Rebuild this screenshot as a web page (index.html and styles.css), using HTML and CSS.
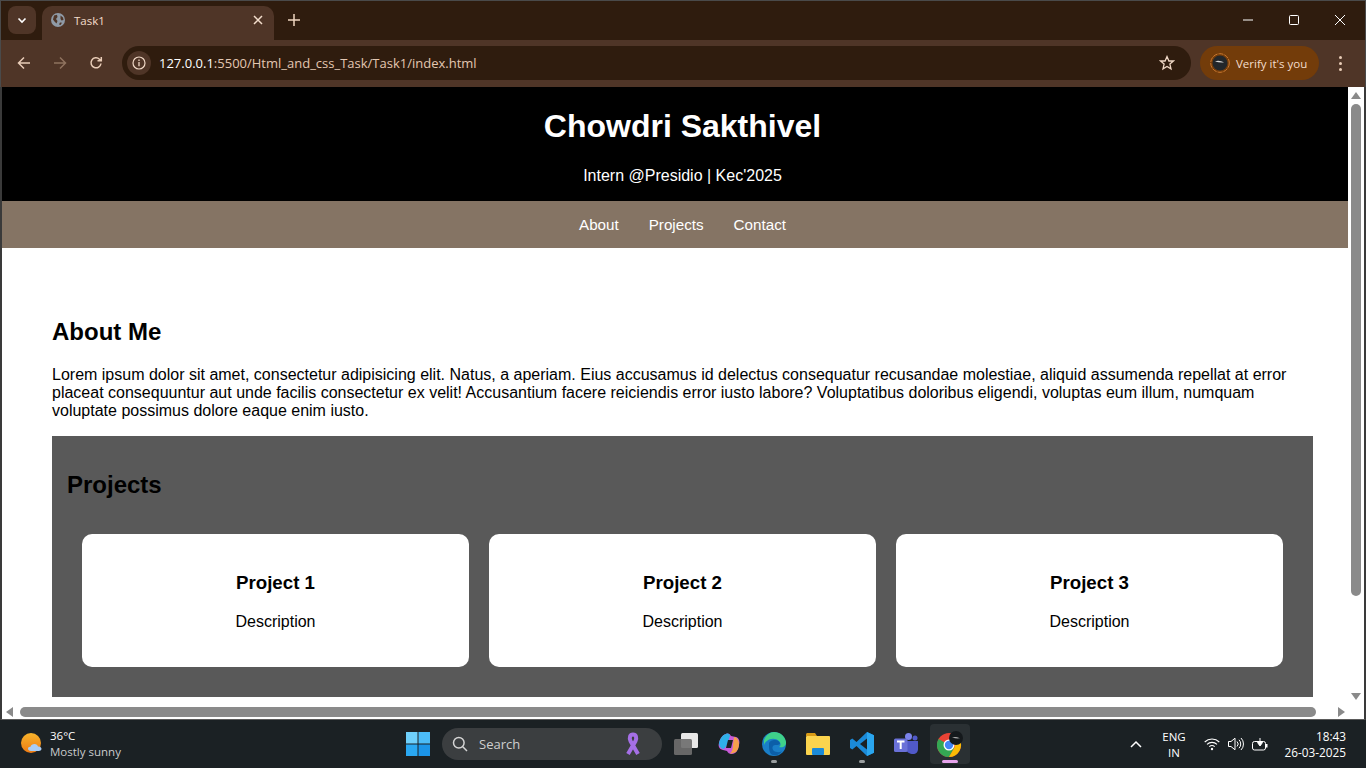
FILE: index.html
```html
<!DOCTYPE html>
<html lang="en">

<head>
  <meta charset="UTF-8">
  <meta name="viewport" content="width=device-width, initial-scale=1.0">
  <title>Task1</title>
  <link rel="stylesheet" href="styles.css">
</head>

<body>
  <div class="window">
    <div class="tabstrip">
      <div class="tabsearch">
        <svg width="12" height="12" viewBox="0 0 12 12"><path d="M2.5 4.5 6 8l3.5-3.5" fill="none" stroke="#fff" stroke-width="1.6"/></svg>
      </div>
      <div class="tab">
        <svg class="globe" width="14" height="14" viewBox="0 0 14 14"><circle cx="7" cy="7" r="7" fill="#8f9aa6"/><path d="M3 2.500 6 1.800 6.500 4 5 6 6.500 8 5.500 10.500 3.500 8.500 2 6.500zM9.500 2.500l2.500 2 .5 2.500-2 .5L9.500 6zM9 9.500l2 .2L9.500 12 8 11.500z" fill="#4f3527"/></svg>
        <span class="tab-title">Task1</span>
        <svg class="tab-close" width="10" height="10" viewBox="0 0 10 10"><path d="M1 1l8 8M9 1l-8 8" stroke="#f3ddcc" stroke-width="1.5"/></svg>
      </div>
      <svg class="newtab" width="12" height="12" viewBox="0 0 12 12"><path d="M6 0v12M0 6h12" stroke="#f0d5c0" stroke-width="1.5"/></svg>
      <div class="winctrls">
        <svg width="12" height="12" viewBox="0 0 12 12"><path d="M1 6h10" stroke="#fff"/></svg>
        <svg width="12" height="12" viewBox="0 0 12 12"><rect x="1.5" y="1.5" width="9" height="9" rx="1" fill="none" stroke="#fff"/></svg>
        <svg width="12" height="12" viewBox="0 0 12 12"><path d="M1 1l10 10M11 1 1 11" stroke="#fff"/></svg>
      </div>
    </div>
    <div class="toolbar">
      <svg class="navbtn" width="14" height="14" viewBox="0 0 14 14"><path d="M13 7H2M7 1.5 1.5 7 7 12.5" fill="none" stroke="#e9cdb8" stroke-width="1.5"/></svg>
      <svg class="navbtn" width="14" height="14" viewBox="0 0 14 14"><path d="M1 7h11M7 1.5 12.5 7 7 12.5" fill="none" stroke="#8f735f" stroke-width="1.5"/></svg>
      <svg class="navbtn" width="14" height="14" viewBox="0 0 14 14"><path d="M12 7.5A5 5 0 1 1 10.5 3.2L12 4.6M12.3 1v3.8H8.500" fill="none" stroke="#e9cdb8" stroke-width="1.5"/></svg>
      <div class="omnibox">
        <div class="siteinfo">
          <svg width="14" height="14" viewBox="0 0 14 14"><circle cx="7" cy="7" r="6" fill="none" stroke="#f0d8c6" stroke-width="1.2"/><path d="M7 6v4.200M7 3.600v1.300" stroke="#f0d8c6" stroke-width="1.3"/></svg>
        </div>
        <span class="url"><b>127.0.0.1</b>:5500/Html_and_css_Task/Task1/index.html</span>
        <svg class="star" width="16" height="16" viewBox="0 0 16 16"><path d="M8 1.600 9.900 6h4.600l-3.600 3.100 1.100 4.800L8 11.400l-4 2.500 1.100-4.800L1.500 6h4.600z" fill="none" stroke="#f0d8c6" stroke-width="1.3"/></svg>
      </div>
      <div class="verify">
        <svg width="20" height="20" viewBox="0 0 20 20"><circle cx="10" cy="10" r="9.300" fill="none" stroke="#c9772f" stroke-dasharray="5 1"/><circle cx="10" cy="10" r="7.500" fill="#23272b"/><path d="M5 8.500c3-1.500 6-.5 9 1-3 .2-6 0-9-1z" fill="#d8d8d8"/></svg>
        <span>Verify it's you</span>
      </div>
      <div class="kebab"><i></i><i></i><i></i></div>
    </div>
    <div class="viewport">
      <div class="page">
        <div class="page-body">
          <header class="hero">
            <h1>Chowdri Sakthivel</h1>
            <p>Intern @Presidio | Kec'2025</p>
          </header>
          <nav class="nav">
            <a>About</a>
            <a>Projects</a>
            <a>Contact</a>
          </nav>
          <main class="content">
            <section class="about">
              <h2>About Me</h2>
              <p>Lorem ipsum dolor sit amet, consectetur adipisicing elit. Natus, a aperiam. Eius accusamus id delectus consequatur recusandae molestiae, aliquid assumenda repellat at error placeat consequuntur aut unde facilis consectetur ex velit! Accusantium facere reiciendis error iusto labore? Voluptatibus doloribus eligendi, voluptas eum illum, numquam voluptate possimus dolore eaque enim iusto.</p>
            </section>
            <section class="projects">
              <h2>Projects</h2>
              <div class="cards">
                <div class="card"><h3>Project 1</h3><p>Description</p></div>
                <div class="card"><h3>Project 2</h3><p>Description</p></div>
                <div class="card"><h3>Project 3</h3><p>Description</p></div>
              </div>
            </section>
          </main>
        </div>
      </div>
      <div class="vscroll">
        <svg width="10" height="7" viewBox="0 0 10 7"><path d="M5 0l5 7H0z" fill="#8a8a8a"/></svg>
        <div class="vthumb"></div>
        <svg width="10" height="7" viewBox="0 0 10 7"><path d="M5 7 0 0h10z" fill="#8a8a8a"/></svg>
      </div>
      <div class="hscroll">
        <svg width="7" height="10" viewBox="0 0 7 10"><path d="M0 5l7-5v10z" fill="#8a8a8a"/></svg>
        <div class="hthumb"></div>
        <svg width="7" height="10" viewBox="0 0 7 10"><path d="M7 5 0 0v10z" fill="#8a8a8a"/></svg>
      </div>
    </div>
    <div class="taskbar">
      <div class="weather">
        <svg width="24" height="24" viewBox="0 0 24 24"><defs><linearGradient id="sun" x1="0" y1="0" x2="0" y2="1"><stop offset="0" stop-color="#f7b42c"/><stop offset="1" stop-color="#ee7a12"/></linearGradient></defs><circle cx="11" cy="11" r="10" fill="url(#sun)"/><path d="M11 19c-2 0-3-1-3-2.200s1-2.200 2.500-2c.5-1.800 2-2.800 4-2.800s3 1 3.500 2.500c2-.3 3.500.8 3.500 2.300S20 19 19 19z" fill="#a9cdf5"/></svg>
        <div class="weather-text">
          <span class="temp">36°C</span>
          <span class="cond">Mostly sunny</span>
        </div>
      </div>
      <div class="taskcenter">
        <svg class="win" width="24" height="24" viewBox="0 0 24 24"><rect width="11.500" height="11.500" fill="#6fd0fb"/><rect x="12.500" width="11.500" height="11.500" fill="#4cbcf8"/><rect y="12.500" width="11.500" height="11.500" fill="#2aa8f2"/><rect x="12.500" y="12.500" width="11.500" height="11.500" fill="#1b94e8"/></svg>
        <div class="search">
          <svg width="16" height="16" viewBox="0 0 16 16"><circle cx="6.800" cy="6.800" r="5.300" fill="none" stroke="#d5d5d5" stroke-width="1.500"/><path d="M10.800 10.800 15 15" stroke="#d5d5d5" stroke-width="1.500"/></svg>
          <span>Search</span>
          <svg class="ribbon" width="18" height="24" viewBox="0 0 18 24"><path d="M4 22 11.500 9C13 5.500 12 2.500 9 2.500S5 5.500 6.500 9L14 22" fill="none" stroke="#a56fe6" stroke-width="4"/></svg>
        </div>
        <div class="appicons">
          <div class="app">
            <svg width="24" height="24" viewBox="0 0 24 24"><rect x="7" y="1" width="17" height="15" rx="1.500" fill="#e8e8e8"/><rect x="0" y="7" width="18" height="16" rx="1.500" fill="#6e6e6e" fill-opacity=".92"/></svg>
          </div>
          <div class="app">
            <svg width="24" height="24" viewBox="0 0 24 24"><path d="M8 2c2-1 4 0 5 2l5 1c3 1 4 4 3 8-1 5-3 9-7 9-3 0-4-1-5-3l-4-1C1 17 0 14 1 11 2 7 4 3 8 2z" fill="#c85ad8"/><path d="M8 2c2-1 4 0 4 2l-3 9-3 4c-3 0-5-3-5-6C2 7 4 3 8 2z" fill="#2fb0e8"/><path d="M16 5c3 0 5 3 5 7 0 3-1 6-3 8l-6 2c2-3 3-5 3-9z" fill="#f5a04c"/><path d="M10 8h5l-2 8H8z" fill="#1b2124"/></svg>
          </div>
          <div class="app dot">
            <svg width="26" height="26" viewBox="0 0 26 26"><circle cx="13" cy="13" r="12" fill="#1a7fc8"/><path d="M3 9c2-5 6-8 10-8 6 0 11 4 12 10 .5 4-3 6-7 5 2-1 2-4 0-6-3-3-9-3-12 0-1.500 1-2.500 2-3 4z" fill="#3fd18a"/><path d="M8 13c0-3 3-4 6-4 3 0 5 2 5 4-1 1-4 1-5 1-2 0-4 3-1 6 2 1 5 2 8 0-2 3-5 5-9 4-4-1-4-7-4-11z" fill="#0c5fa8"/></svg>
          </div>
          <div class="app">
            <svg width="24" height="22" viewBox="0 0 24 22"><path d="M0 1.500C0 .7.700 0 1.500 0H9l2 3H0z" fill="#d99b16"/><rect y="3" width="24" height="19" rx="1" fill="#fbd44e"/><rect x="6" y="15" width="12" height="7" rx="1" fill="#1b8ad8"/></svg>
          </div>
          <div class="app dot">
            <svg width="24" height="24" viewBox="0 0 24 24"><path d="M17 0l7 3.200v17.600L17 24 6.500 14 2.300 17.500 0 16V8l2.300-1.500L6.500 10z" fill="#1b8ad8"/><path d="M17 6.500 10 12l7 5.500z" fill="#1b2124"/><path d="M17 0l7 3.200v17.600L17 24z" fill="#2aa6ef"/></svg>
          </div>
          <div class="app">
            <svg width="24" height="24" viewBox="0 0 24 24"><circle cx="14.500" cy="4.500" r="3.500" fill="#7b83eb"/><circle cx="21" cy="6" r="2.500" fill="#5059c9"/><path d="M12 9h12v8c0 3-2 5-5 5s-7-2-7-5z" fill="#5059c9"/><rect x="0" y="6.500" width="13.500" height="13.500" rx="1.500" fill="#6a71d8"/><path d="M3 9.500h7.500M6.700 9.500V17" stroke="#fff" stroke-width="2"/></svg>
          </div>
          <div class="app active">
            <svg width="26" height="26" viewBox="0 0 26 26"><circle cx="12" cy="14" r="12" fill="#ea4335"/><path d="M12 14 1.600 8A12 12 0 0 0 12 26l5.200-9z" fill="#34a853"/><path d="M22.400 8A12 12 0 0 1 12 26l5.200-9a6 6 0 0 0 0-6z" fill="#fbbc05"/><circle cx="12" cy="14" r="5.500" fill="#fff"/><circle cx="12" cy="14" r="4.200" fill="#4285f4"/><circle cx="19" cy="7" r="7" fill="#15191c"/><path d="M15 6.500c2.500-1 5-.5 8 .8-2.500.3-5 .1-8-.8z" fill="#a8a8a8"/></svg>
          </div>
        </div>
      </div>
      <div class="tray">
        <svg class="chev" width="12" height="8" viewBox="0 0 12 8"><path d="M1 7l5-5 5 5" fill="none" stroke="#fff" stroke-width="1.500"/></svg>
        <div class="lang"><span>ENG</span><span>IN</span></div>
        <div class="trayicons">
          <svg width="16" height="14" viewBox="0 0 16 14"><path d="M.7 5a10.500 10.500 0 0 1 14.600 0M3 7.400a7.200 7.200 0 0 1 10 0M5.300 9.700a4 4 0 0 1 5.400 0" fill="none" stroke="#fff" stroke-width="1.100"/><circle cx="8" cy="12" r="1.200" fill="#fff"/></svg>
          <svg width="16" height="14" viewBox="0 0 16 14"><path d="M.5 4.500h2.500L7 1.200v11.600L3 9.500H.5z" fill="none" stroke="#fff"/><path d="M9 4.500a3.500 3.500 0 0 1 0 5M11 2.800a6 6 0 0 1 0 8.400M13 1a8.500 8.500 0 0 1 0 12" fill="none" stroke="#fff"/></svg>
          <svg width="16" height="14" viewBox="0 0 16 14"><rect x=".5" y="4.500" width="13" height="8.500" rx="2" fill="none" stroke="#fff"/><rect x="14" y="7" width="1.500" height="3.500" fill="#fff"/><path d="M8 1v7M5.500 5.500 8 9l2.500-3.500z" fill="#fff" stroke="#fff"/></svg>
        </div>
        <div class="clock"><span>18:43</span><span>26-03-2025</span></div>
      </div>
    </div>
  </div>
</body>

</html>
```

FILE: styles.css
```css
*{
  box-sizing: border-box;
}
html,body{
  margin:0;
  height:100%;
  overflow:hidden;
}
body{
  font-family:"Liberation Sans",Arial,sans-serif;
  background:#1b2124;
}
.window{
  width:1366px;
  height:768px;
  display:flex;
  flex-direction:column;
}

/* browser top */
.tabstrip{
  height:40px;
  flex:none;
  display:flex;
  align-items:flex-end;
  padding-left:7px;
  background:#2f1c0e;
  border-top:1px solid #4a4a4a;
  border-left:1px solid #4a4a4a;
  border-right:1px solid #4a4a4a;
}
.tabsearch{
  width:28px;
  height:28px;
  margin-bottom:6px;
  border-radius:8px;
  background:#4f3527;
  display:flex;
  align-items:center;
  justify-content:center;
}
.tab{
  width:232px;
  height:34px;
  margin-left:6px;
  padding:0 11px 6px 9px;
  border-radius:10px 10px 0 0;
  background:#4f3527;
  display:flex;
  align-items:center;
  font-family:"Open Sans",sans-serif;
  font-size:11.5px;
  color:#f3ddcc;
}
.tab-title{
  flex:1;
  margin-left:9px;
}
.newtab{
  margin:0 0 14px 14px;
}
.winctrls{
  margin-left:auto;
  margin-bottom:14px;
  padding-right:19px;
  display:flex;
  gap:34px;
}
.toolbar{
  height:47px;
  flex:none;
  display:flex;
  align-items:center;
  padding:0 16px 1px 16px;
  background:#4f3527;
  border-left:1px solid #4a4a4a;
  border-right:1px solid #4a4a4a;
}
.navbtn{
  margin-right:22px;
}
.omnibox{
  width:1069px;
  height:34px;
  margin-left:-3px;
  padding:0 16px 0 5px;
  border-radius:17px;
  background:#2f1c0e;
  display:flex;
  align-items:center;
  font-family:"Open Sans",sans-serif;
  font-size:13px;
  color:#e3c7b2;
}
.siteinfo{
  width:24px;
  height:24px;
  border-radius:50%;
  background:#4f3527;
  display:flex;
  align-items:center;
  justify-content:center;
}
.url{
  flex:1;
  margin-left:8px;
}
.url b{
  font-weight:400;
  color:#fff;
}
.verify{
  width:119px;
  height:34px;
  margin-left:9px;
  padding-left:10px;
  border-radius:17px;
  background:#733c0a;
  display:flex;
  align-items:center;
  gap:6px;
  font-family:"Open Sans",sans-serif;
  font-size:11.5px;
  color:#f3ddcc;
}
.kebab{
  margin-left:20px;
  display:flex;
  flex-direction:column;
  gap:3px;
}
.kebab i{
  width:3px;
  height:3px;
  border-radius:50%;
  background:#e9cdb8;
}

/* the page */
.viewport{
  flex:1;
  position:relative;
  overflow:hidden;
  background:#fff;
  border-left:2px solid #3a3a3a;
  border-right:2px solid #3a3a3a;
  border-bottom:1px solid #5a5a5a;
}
.page{
  width:1346px;
  height:617px;
  overflow:hidden;
}
.page-body{
  width:1361px;
}
.hero{
  height:114px;
  background:#000;
  color:#fff;
  text-align:center;
  padding-top:21px;
}
.hero h1{
  margin:0;
  font-size:32px;
  line-height:37px;
}
.hero p{
  margin:22px 0 0;
  font-size:16px;
  line-height:18px;
}
.nav{
  height:47px;
  background:#857464;
  display:flex;
  justify-content:center;
  align-items:center;
  gap:30px;
  color:#fff;
  font-size:15.2px;
}
.content{
  margin:0 50px;
  padding-top:70px;
}
.about h2,.projects h2{
  margin:0;
  font-size:24px;
  line-height:28px;
}
.about p{
  margin:20px 0 16px;
  font-size:16px;
  line-height:18px;
}
.projects{
  height:261px;
  background:#595959;
  padding:35px 30px 0 15px;
}
.cards{
  margin:35px 0 0 15px;
  display:flex;
  gap:20px;
}
.card{
  flex:1;
  height:133px;
  background:#fff;
  border-radius:10px;
  text-align:center;
  padding-top:38px;
}
.card h3{
  margin:0;
  font-size:18.72px;
  line-height:22px;
}
.card p{
  margin:19px 0 0;
  font-size:16px;
  line-height:18px;
}

/* scrollbars sit on top of the page */
.vscroll{
  position:absolute;
  top:0;
  right:0;
  width:16px;
  height:617px;
  background:#fff;
  display:flex;
  flex-direction:column;
  align-items:center;
  padding-top:5px;
}
.vthumb{
  width:10px;
  height:492px;
  margin:5px 0 auto;
  border-radius:5px;
  background:#8a8a8a;
}
.vscroll svg:last-child{
  margin-bottom:4px;
}
.hscroll{
  position:absolute;
  left:0;
  bottom:0;
  width:100%;
  height:15px;
  background:#fff;
  display:flex;
  align-items:center;
  padding:0 19px 0 4px;
}
.hthumb{
  width:1296px;
  height:10px;
  margin:0 auto 0 7px;
  border-radius:5px;
  background:#8a8a8a;
}

/* windows taskbar */
.taskbar{
  height:48px;
  flex:none;
  position:relative;
  display:flex;
  align-items:center;
  justify-content:space-between;
  padding:0 20px 0 20px;
  background:#1b2124;
  color:#fff;
  font-family:"Open Sans",sans-serif;
  font-size:11.5px;
}
.weather{
  display:flex;
  align-items:center;
  gap:6px;
}
.weather-text{
  display:flex;
  flex-direction:column;
  line-height:16px;
}
.cond{
  color:#c9cbcc;
}
.taskcenter{
  position:absolute;
  left:406px;
  top:0;
  height:48px;
  display:flex;
  align-items:center;
}
.search{
  width:220px;
  height:32px;
  margin-left:12px;
  padding:0 20px 0 10px;
  border-radius:16px;
  background:#3b3e40;
  display:flex;
  align-items:center;
  gap:11px;
  font-size:13px;
  color:#cfcfcf;
}
.ribbon{
  margin-left:auto;
}
.appicons{
  margin-left:4px;
  display:flex;
  align-items:center;
}
.app{
  width:40px;
  height:40px;
  margin-right:4px;
  border-radius:4px;
  position:relative;
  display:flex;
  align-items:center;
  justify-content:center;
}
.app.active{
  background:#2a3033;
}
.app.dot::after,.app.active::after{
  content:"";
  position:absolute;
  bottom:1px;
  left:50%;
  width:6px;
  height:3px;
  margin-left:-3px;
  border-radius:2px;
  background:#9a9ea0;
}
.app.active::after{
  width:16px;
  margin-left:-8px;
  background:#e6a3ec;
}
.tray{
  display:flex;
  align-items:center;
}
.chev{
  margin-right:12px;
}
.lang{
  width:40px;
  padding-top:1px;
  display:flex;
  flex-direction:column;
  align-items:center;
  line-height:16px;
}
.trayicons{
  margin-left:10px;
  display:flex;
  gap:8px;
}
.clock{
  width:62px;
  margin-left:16px;
  display:flex;
  flex-direction:column;
  align-items:flex-end;
  font-size:11.8px;
  line-height:16px;
  white-space:nowrap;
}
```
